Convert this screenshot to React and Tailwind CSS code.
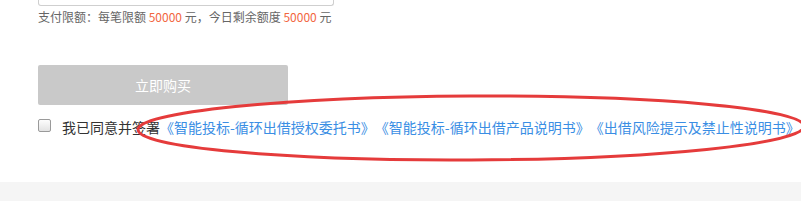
import React from "react";

const font = { fontFamily: '"Noto Sans CJK SC", "Microsoft YaHei", sans-serif' };

const agreements = [
  "《智能投标-循环出借授权委托书》",
  "《智能投标-循环出借产品说明书》",
  "《出借风险提示及禁止性说明书》",
];

export default function App() {
  return (
    <div
      className="relative w-full h-[201px] bg-white overflow-hidden [text-spacing-trim:space-all]"
      style={font}
    >
      <div className="h-[182px] pl-[38px]">
        {/* bottom edge of the amount input */}
        <div className="w-[296px] h-[6px] border-x border-b border-[#cfcfcf] rounded-b-[3px]" />

        <p className="mt-[2px] text-[12px] leading-[18px] text-[#666]">
          支付限额：每笔限额 <span className="text-[#f2663f]">50000</span> 元，今日剩余额度{" "}
          <span className="text-[#f2663f]">50000</span> 元
        </p>

        <button
          disabled
          className="mt-[39px] w-[250px] h-[40px] bg-[#c9c9c9] text-white text-[14px] rounded-[2px] flex items-center justify-center"
        >
          立即购买
        </button>

        <div className="mt-[12px] flex items-start whitespace-nowrap">
          <input
            type="checkbox"
            className="appearance-none mt-[2px] w-[13px] h-[13px] m-0 border border-[#9a9a9a] rounded-[2px] bg-gradient-to-b from-[#fdfdfd] to-[#e3e3e3]"
          />
          <span className="ml-[11px] text-[14px] leading-[22px] text-[#333] -mt-[1px]">
            我已同意并签署
            {agreements.map((a) => (
              <a key={a} href="#" className="text-[#3a8ee4]">
                {a}
              </a>
            ))}
          </span>
        </div>
      </div>

      <div className="h-[19px] bg-[#f5f5f5]" />

      {/* annotation ring */}
      <svg
        className="absolute left-0 top-0 pointer-events-none"
        width="801"
        height="201"
        viewBox="0 0 801 201"
      >
        <ellipse
          cx="471"
          cy="128"
          rx="333"
          ry="32"
          fill="none"
          stroke="#e53b3b"
          strokeWidth="3"
          transform="rotate(-0.3 471 128)"
        />
      </svg>
    </div>
  );
}
